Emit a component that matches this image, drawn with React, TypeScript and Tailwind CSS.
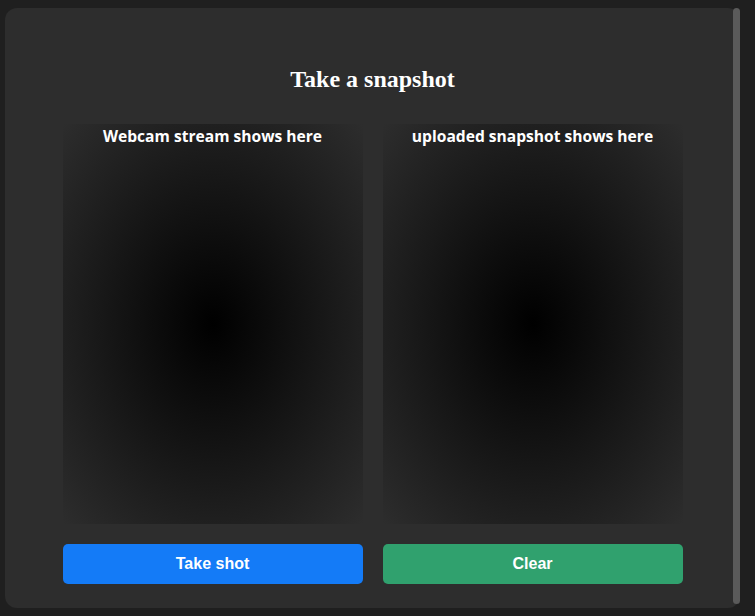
export default function App() {
  return (
    <div className="min-h-[616px] w-[755px] bg-[#1f1f1f] pt-2 pl-[5px]">
      <div className="relative h-[600px] w-[735px] rounded-xl bg-[#2d2d2d]">
        {/* scrollbar thumb */}
        <div className="absolute right-0 top-0 h-[596px] w-[7px] rounded-full bg-[#5a5a5a]" />

        <div className="mx-auto w-[620px] pt-[57px]">
          <h1 className="text-center text-[24px] leading-[28px] font-bold text-white font-['Liberation_Serif',serif]">
            Take a snapshot
          </h1>

          <div className="mt-[31px] grid grid-cols-2 gap-5">
            <div className="h-[400px] bg-[radial-gradient(#000000,#2d2d2d)] pt-[1px] text-center">
              <p className="text-[15.6px] leading-[22px] font-bold text-white font-['Open_Sans',sans-serif]">
                Webcam stream shows here
              </p>
            </div>
            <div className="h-[400px] bg-[radial-gradient(#000000,#2d2d2d)] pt-[1px] text-center">
              <p className="text-[15.6px] leading-[22px] font-bold text-white font-['Open_Sans',sans-serif]">
                uploaded snapshot shows here
              </p>
            </div>
          </div>

          <div className="mt-5 grid grid-cols-2 gap-5">
            <button className="h-10 rounded-[5px] bg-[#147bf7] text-base font-bold text-white font-['Liberation_Sans',Arial,sans-serif]">
              Take shot
            </button>
            <button className="h-10 rounded-[5px] bg-[#30a16e] text-base font-bold text-white font-['Liberation_Sans',Arial,sans-serif]">
              Clear
            </button>
          </div>
        </div>
      </div>
    </div>
  );
}
